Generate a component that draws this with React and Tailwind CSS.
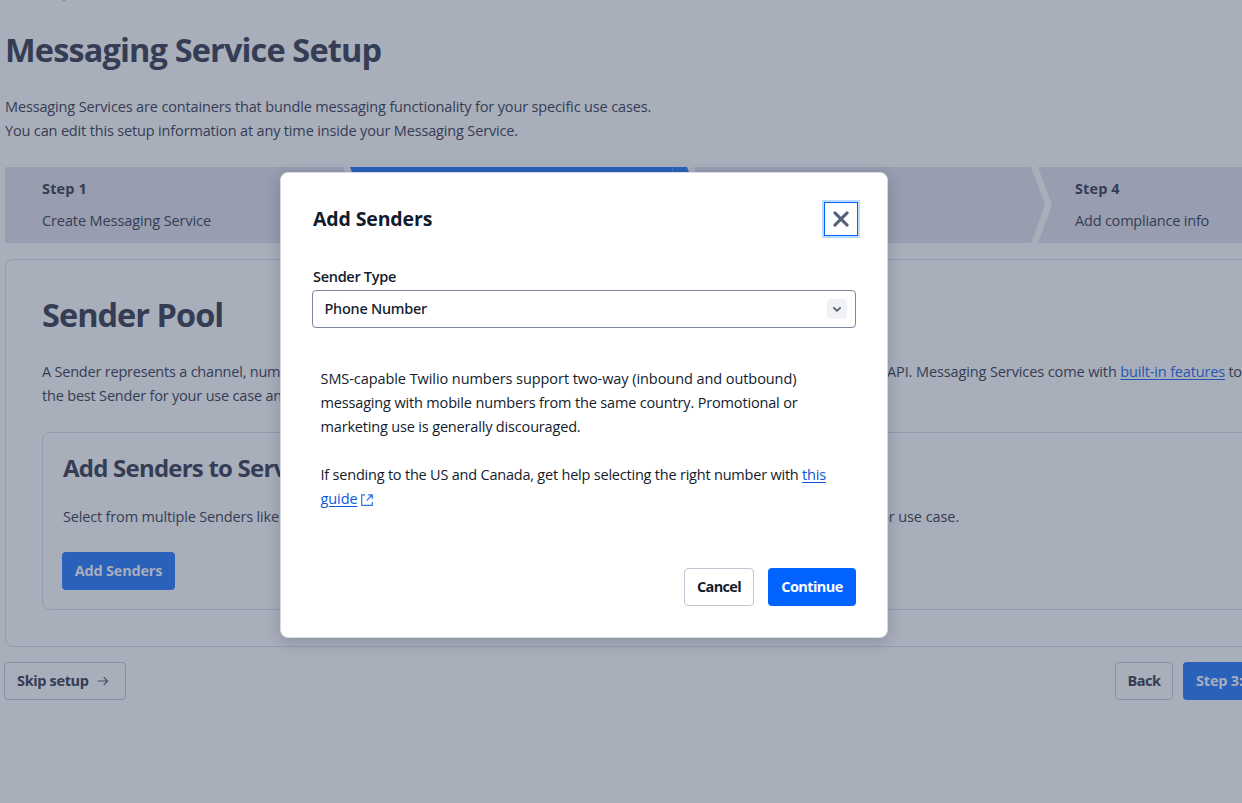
import React from "react";

function TopBar() {
  return (
    <header className="pl-[5px]">
      <div className="ml-[58px] h-px w-[2px] bg-[#7d8394]" />
      <h1 className="mt-[27px] h-[44px] text-[32.5px] leading-[44px] font-bold tracking-[-0.86px] whitespace-nowrap">
        Messaging Service Setup
      </h1>
      <p className="mt-[23px] text-[14.5px] leading-6 tracking-[-0.144px] whitespace-nowrap">
        Messaging Services are containers that bundle messaging functionality for your specific use cases.
      </p>
      <p className="text-[14.5px] leading-6 tracking-[-0.158px] whitespace-nowrap">
        You can edit this setup information at any time inside your Messaging Service.
      </p>
    </header>
  );
}

const notched =
  "-ml-[7px] w-[351px] [clip-path:polygon(0_0,calc(100%-14px)_0,100%_50%,calc(100%-14px)_100%,0_100%,14px_50%)]";

function Steps() {
  return (
    <ol className="mt-6 ml-[5px] flex h-[76px] w-[1400px] text-[14.5px] leading-6 whitespace-nowrap">
      <li className="flex w-[352px] shrink-0 flex-col gap-2 rounded-l-[2px] bg-[#989db0] pt-2.5 pl-[37px] [clip-path:polygon(0_0,calc(100%-14px)_0,100%_50%,calc(100%-14px)_100%,0_100%)]">
        <strong className="font-bold tracking-[0.15px]">Step 1</strong>
        <span className="tracking-[-0.104px]">Create Messaging Service</span>
      </li>
      <li className={`${notched} flex shrink-0 bg-[#2a61bb]`}>
        <span className="ml-[322px] w-px bg-[#4a76bf]" />
      </li>
      <li className={`${notched} shrink-0 bg-[#989db0]`} />
      <li className={`${notched} flex shrink-0 flex-col gap-2 bg-[#989db0] pt-2.5 pl-[37px]`}>
        <strong className="font-bold tracking-[0.1px]">Step 4</strong>
        <span className="tracking-[-0.2px]">Add compliance info</span>
      </li>
    </ol>
  );
}

function SenderPool() {
  return (
    <section className="mt-4 ml-[5px] h-[388px] w-[1400px] rounded-lg border border-[#959bae] px-9 pt-[33px]">
      <h2 className="h-[44px] text-[32.5px] leading-[44px] font-bold tracking-[-0.98px]">Sender Pool</h2>
      <div className="mt-[23px] flex text-[14.5px] leading-6 whitespace-nowrap">
        <div className="w-[240px] shrink-0">
          <p className="tracking-[-0.21px]">A Sender represents a channel, num</p>
          <p className="tracking-[-0.19px]">the best Sender for your use case an</p>
        </div>
        <p className="ml-[605px] tracking-[-0.11px]">
          API. Messaging Services come with{" "}
          <a className="tracking-[-0.16px] text-[#2558b0] underline underline-offset-2">built-in features</a>
          <span className="tracking-[-0.3px]"> to</span>
        </p>
      </div>
      <div className="mt-6 h-[178px] w-[1326px] rounded-lg border border-[#959bae] px-5 pt-[19px]">
        <h3 className="text-[24px] leading-8 font-bold tracking-[-0.78px] whitespace-nowrap">Add Senders to Serv</h3>
        <div className="mt-[21px] flex text-[14.5px] leading-6 whitespace-nowrap">
          <p className="w-[219px] tracking-[-0.165px]">Select from multiple Senders like</p>
          <p className="ml-[598px] tracking-[-0.07px]">or use case.</p>
        </div>
        <button className="mt-[23px] -ml-px block h-[38px] w-[113px] rounded bg-[#2a61bb] text-[14.5px] font-bold tracking-[-0.22px] text-[#a9aebb]">
          Add Senders
        </button>
      </div>
    </section>
  );
}

function FooterActions() {
  return (
    <footer className="mt-[15px] ml-1 flex w-[1400px] text-[14.5px] font-bold whitespace-nowrap">
      <button className="flex h-[38px] w-[122px] items-center rounded border border-[#898fa5] pl-3 tracking-[-0.35px]">
        <span className="w-[72px] text-left">Skip setup</span>
        <svg className="ml-2 size-3" viewBox="0 0 12 12" fill="none" stroke="#454e63" strokeWidth="1.1" strokeLinecap="round" strokeLinejoin="round">
          <path d="M1.2 6h9.4M7 2.4 10.6 6 7 9.6" />
        </svg>
      </button>
      <button className="ml-[989px] h-[38px] w-[58px] rounded border border-[#898fa5] tracking-[-0.5px]">Back</button>
      <button className="ml-2.5 h-[38px] w-[180px] rounded bg-[#2a61bb] pl-[13px] text-left tracking-[-0.2px] text-[#a9aebb]">
        Step 3:
      </button>
    </footer>
  );
}

function AddSendersDialog() {
  return (
    <div
      role="dialog"
      className="absolute top-[172px] left-[280px] flex h-[466px] w-[608px] flex-col rounded-lg border border-[#d8dae5] bg-white px-[31px] text-[14.5px] text-[#121c2d] shadow-[0_4px_16px_rgba(18,28,45,0.2)]"
    >
      <div className="mt-[29px] flex h-[34px] items-center justify-between">
        <h2 className="pl-px text-[19.5px] leading-7 font-bold tracking-[-0.13px]">Add Senders</h2>
        <button className="-mr-0.5 flex size-[34px] items-center justify-center border border-[#0263ff] shadow-[0_0_0_2px_#bcdcff]">
          <svg className="size-4" viewBox="0 0 16 16" fill="none" stroke="#56607a" strokeWidth="3" strokeLinecap="round">
            <path d="M1.9 1.9 14.1 14.1M14.1 1.9 1.9 14.1" />
          </svg>
        </button>
      </div>
      <label className="mt-[31px] h-5 pl-px leading-5 font-semibold tracking-[-0.3px]">Sender Type</label>
      <div className="mt-[3px] flex h-[38px] items-center justify-between rounded border border-[#7c86a0] pr-2 pl-[11.5px]">
        <span className="font-['Noto_Sans',sans-serif] font-medium tracking-[-0.25px]">Phone Number</span>
        <span className="flex size-5 items-center justify-center rounded bg-[#f1f2f5]">
          <svg className="size-2.5" viewBox="0 0 10 10" fill="none" stroke="#56607a" strokeWidth="1.8" strokeLinecap="round" strokeLinejoin="round">
            <path d="M1.9 3.8 5 6.8 8.1 3.8" />
          </svg>
        </span>
      </div>
      <div className="mt-[39px] pl-[8.5px] leading-6 whitespace-nowrap">
        <p className="tracking-[-0.07px]">SMS-capable Twilio numbers support two-way (inbound and outbound)</p>
        <p className="tracking-[-0.16px]">messaging with mobile numbers from the same country. Promotional or</p>
        <p className="tracking-[-0.17px]">marketing use is generally discouraged.</p>
        <p className="mt-6 tracking-[-0.21px]">
          If sending to the US and Canada, get help selecting the right number with{" "}
          <a className="text-[#0b57d8] underline underline-offset-2">this</a>
        </p>
        <p className="flex items-center tracking-[-0.1px]">
          <a className="text-[#0b57d8] underline underline-offset-2">guide</a>
          <svg className="mt-0.5 ml-1 size-3" viewBox="0 0 12 12" fill="none" stroke="#2f74ea" strokeWidth="1.2">
            <path d="M4 .9H.7v10.4h10.6V8M7.2.9h4.1V5M11.1 1 5.6 6.6" />
          </svg>
        </p>
      </div>
      <div className="mt-[57px] flex justify-end gap-3.5 font-bold">
        <button className="h-[38px] w-[70px] rounded border border-[#c4c5d4] tracking-[-0.65px]">Cancel</button>
        <button className="h-[38px] w-[88px] rounded bg-[#0263ff] tracking-[-0.6px] text-white">Continue</button>
      </div>
    </div>
  );
}

export default function App() {
  return (
    <div className="relative h-[803px] w-full overflow-hidden bg-[#a9aebb] font-['Open_Sans','Noto_Sans',sans-serif] text-[#343d54]">
      <TopBar />
      <Steps />
      <SenderPool />
      <FooterActions />
      <AddSendersDialog />
    </div>
  );
}
